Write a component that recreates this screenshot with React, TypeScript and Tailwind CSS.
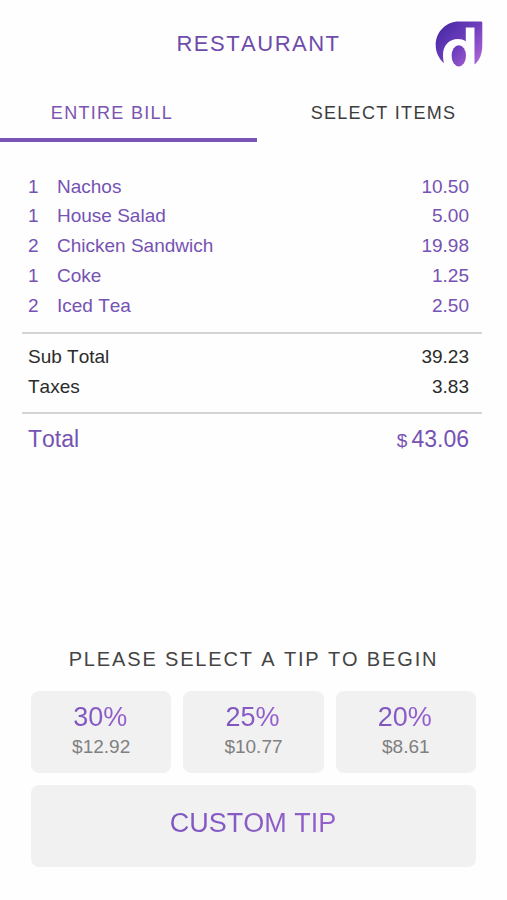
import React from "react";

interface IItem {
  quantity: number;
  name: string;
  price: string;
}

interface ITip {
  percent: string;
  amount: string;
}

const items: IItem[] = [
  { quantity: 1, name: "Nachos", price: "10.50" },
  { quantity: 1, name: "House Salad", price: "5.00" },
  { quantity: 2, name: "Chicken Sandwich", price: "19.98" },
  { quantity: 1, name: "Coke", price: "1.25" },
  { quantity: 2, name: "Iced Tea", price: "2.50" },
];

const tips: ITip[] = [
  { percent: "30%", amount: "$12.92" },
  { percent: "25%", amount: "$10.77" },
  { percent: "20%", amount: "$8.61" },
];

const Logo = () => (
  <svg className="w-12 h-12" viewBox="0 0 48 48" fill="none">
    <defs>
      <linearGradient id="logo" x1="4" y1="8" x2="44" y2="44" gradientUnits="userSpaceOnUse">
        <stop offset="0" stopColor="#4b2ba6" />
        <stop offset="0.5" stopColor="#6f3fbd" />
        <stop offset="1" stopColor="#b267d8" />
      </linearGradient>
    </defs>
    <path
      d="M24 0.5H46Q47.3 0.5 47.3 1.8V24C47.3 33 44.5 39.5 39.5 43.5V6.5H30.8V20.3C28.4 18.8 26 18 23 18C14 18 8 24.5 8 34C8 37 8.4 40 9.2 42.2C4 38 0.7 31.5 0.7 24C0.7 11 11 0.5 24 0.5Z"
      fill="url(#logo)"
    />
    <ellipse cx="23.8" cy="34.8" rx="7.2" ry="10.6" fill="url(#logo)" />
  </svg>
);

const Tip = ({ percent, amount }: ITip) => (
  <button className="h-[82px] rounded-lg bg-[#f1f1f1] flex flex-col items-center pt-[11px]">
    <span className="text-[27px] leading-[30px] pr-[2px] bg-linear-to-r from-[#7c55bd] to-[#9860d0] bg-clip-text text-transparent">
      {percent}
    </span>
    <span className="text-[19px] leading-[29px] text-[#808080]">{amount}</span>
  </button>
);

export default function App() {
  return (
    <div className="w-[507px] h-[900px] bg-[#fefefe] flex flex-col font-['Liberation_Sans',Arial,sans-serif] [font-kerning:none] text-[#2b2b2b] overflow-hidden">
      <header className="h-[86px] grid grid-cols-[80px_1fr_80px] items-center shrink-0">
        <h1 className="col-start-2 text-center text-[22px] leading-[30px] tracking-[1.5px] pl-[10px] pt-[2px] text-[#6f4bab]">
          RESTAURANT
        </h1>
        <div className="pl-2 pt-[3px]">
          <Logo />
        </div>
      </header>

      <nav className="flex h-[56px] shrink-0 text-[18px] leading-[54px]">
        <button className="w-[257px] border-b-4 border-[#7b54b8] text-[#7b54b0] tracking-[1.3px] pr-[33px]">
          ENTIRE BILL
        </button>
        <button className="w-[250px] border-b-4 border-transparent text-[#3c3c3c] tracking-[1.3px] pl-[3px]">
          SELECT ITEMS
        </button>
      </nav>

      <main className="mx-[22px] pr-1 pt-[29.5px] text-[19px] leading-[29.75px]">
        <ul className="pl-[6px] pr-[12px] text-[#7552b3]">
          {items.map((item) => (
            <li key={item.name} className="flex">
              <span className="w-[29px]">{item.quantity}</span>
              <span className="flex-1">{item.name}</span>
              <span>{item.price}</span>
            </li>
          ))}
        </ul>
        <div className="mt-[11.5px] pt-[8.5px] pb-[10px] -mr-px pl-[6px] pr-[13px] border-y-2 border-[#d4d4d4]">
          <div className="flex justify-between">
            <span>Sub Total</span>
            <span>39.23</span>
          </div>
          <div className="flex justify-between">
            <span>Taxes</span>
            <span>3.83</span>
          </div>
        </div>
        <div className="mt-[10px] pl-[6px] pr-[12px] flex justify-between items-baseline text-[23px] leading-[30px] text-[#7552b3]">
          <span>Total</span>
          <span>
            <span className="text-[19px] mr-[4px]">$</span>43.06
          </span>
        </div>
      </main>

      <footer className="mt-auto mb-[33px] ml-[31px] mr-[31px]">
        <h2 className="text-center text-[20px] leading-[30px] tracking-[1.85px] mb-[17px] text-[#444444]">
          PLEASE SELECT A TIP TO BEGIN
        </h2>
        <div className="grid grid-cols-3 gap-3">
          {tips.map((tip) => (
            <Tip key={tip.percent} {...tip} />
          ))}
        </div>
        <button className="mt-3 w-full h-[82px] rounded-lg bg-[#f1f1f1] pb-[6px]">
          <span className="text-[27px] pr-px bg-linear-to-r from-[#7f56c0] to-[#9360cc] bg-clip-text text-transparent">
            CUSTOM TIP
          </span>
        </button>
      </footer>
    </div>
  );
}
